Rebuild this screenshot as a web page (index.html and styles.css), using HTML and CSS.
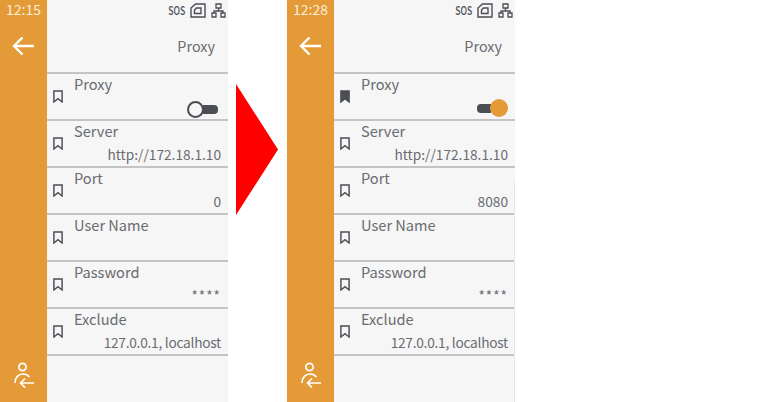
FILE: index.html
```html
<!DOCTYPE html>
<html lang="en">

<head>
    <meta charset="UTF-8">
    <meta name="viewport" content="width=device-width, initial-scale=1.0">
    <title>Proxy</title>
    <link rel="stylesheet" href="styles.css">
</head>

<body>
    <svg class="defs" width="0" height="0">
        <symbol id="mark" viewBox="0 0 11 14">
            <path d="M1 1h9v12L5.500 9.500 1 13z" fill="none" stroke="currentColor" stroke-width="1.600" />
        </symbol>
        <symbol id="mark-on" viewBox="0 0 11 14">
            <path d="M1 1h9v12L5.500 9.500 1 13z" fill="currentColor" stroke="currentColor" stroke-width="1.600" />
        </symbol>
        <symbol id="back" viewBox="0 0 24 20">
            <path d="M22 10H2M10.500 1.500 2 10l8.500 8.500" fill="none" stroke="currentColor" stroke-width="2.400" />
        </symbol>
        <symbol id="user" viewBox="0 0 22 26">
            <circle cx="9.500" cy="5" r="3.600" fill="none" stroke="currentColor" stroke-width="1.700" />
            <path d="M2 21c0-5.500 3.500-9 8-9 3 0 5 1 6.500 3M21 21H7.500M12 16.500 7.500 21l4.500 4.500" fill="none" stroke="currentColor" stroke-width="1.700" />
        </symbol>
        <symbol id="sim" viewBox="0 0 16 15">
            <path d="M5.500 1H15v13H1V5z" fill="none" stroke="currentColor" stroke-width="1.400" />
            <path d="M6.500 5H11v5.500H4.500V7z" fill="none" stroke="currentColor" stroke-width="1.400" />
        </symbol>
        <symbol id="net" viewBox="0 0 15 15">
            <path d="M5 1h5v4H5zM1 10h4v4H1zM10 10h4v4h-4zM7.500 5v3M3 10V8h9v2" fill="none" stroke="currentColor" stroke-width="1.300" />
        </symbol>
    </svg>

    <div class="page">
        <section class="screen">
            <aside class="side">
                <span class="clock">12:15</span>
                <svg class="back"><use href="#back" /></svg>
                <svg class="user"><use href="#user" /></svg>
            </aside>
            <main class="panel">
                <div class="status">
                    <span class="sos">SOS</span>
                    <svg class="sim"><use href="#sim" /></svg>
                    <svg class="net"><use href="#net" /></svg>
                </div>
                <h1 class="title">Proxy</h1>
                <ul class="list">
                    <li class="row">
                        <svg class="mark"><use href="#mark" /></svg>
                        <div class="body">
                            <p class="label">Proxy</p>
                            <div class="toggle off"><i class="knob"></i><i class="pill"></i></div>
                        </div>
                    </li>
                    <li class="row">
                        <svg class="mark"><use href="#mark" /></svg>
                        <div class="body">
                            <p class="label">Server</p>
                            <p class="value">http://172.18.1.10</p>
                        </div>
                    </li>
                    <li class="row">
                        <svg class="mark"><use href="#mark" /></svg>
                        <div class="body">
                            <p class="label">Port</p>
                            <p class="value">0</p>
                        </div>
                    </li>
                    <li class="row">
                        <svg class="mark"><use href="#mark" /></svg>
                        <div class="body">
                            <p class="label">User Name</p>
                            <p class="value"></p>
                        </div>
                    </li>
                    <li class="row">
                        <svg class="mark"><use href="#mark" /></svg>
                        <div class="body">
                            <p class="label">Password</p>
                            <p class="value stars">****</p>
                        </div>
                    </li>
                    <li class="row">
                        <svg class="mark"><use href="#mark" /></svg>
                        <div class="body">
                            <p class="label">Exclude</p>
                            <p class="value tight">127.0.0.1, localhost</p>
                        </div>
                    </li>
                </ul>
            </main>
        </section>

        <div class="arrow-box"><div class="arrow"></div></div>

        <section class="screen edge">
            <aside class="side">
                <span class="clock">12:28</span>
                <svg class="back"><use href="#back" /></svg>
                <svg class="user"><use href="#user" /></svg>
            </aside>
            <main class="panel">
                <div class="status">
                    <span class="sos">SOS</span>
                    <svg class="sim"><use href="#sim" /></svg>
                    <svg class="net"><use href="#net" /></svg>
                </div>
                <h1 class="title">Proxy</h1>
                <ul class="list">
                    <li class="row">
                        <svg class="mark"><use href="#mark-on" /></svg>
                        <div class="body">
                            <p class="label">Proxy</p>
                            <div class="toggle on"><i class="pill"></i><i class="knob"></i></div>
                        </div>
                    </li>
                    <li class="row">
                        <svg class="mark"><use href="#mark" /></svg>
                        <div class="body">
                            <p class="label">Server</p>
                            <p class="value">http://172.18.1.10</p>
                        </div>
                    </li>
                    <li class="row">
                        <svg class="mark"><use href="#mark" /></svg>
                        <div class="body">
                            <p class="label">Port</p>
                            <p class="value">8080</p>
                        </div>
                    </li>
                    <li class="row">
                        <svg class="mark"><use href="#mark" /></svg>
                        <div class="body">
                            <p class="label">User Name</p>
                            <p class="value"></p>
                        </div>
                    </li>
                    <li class="row">
                        <svg class="mark"><use href="#mark" /></svg>
                        <div class="body">
                            <p class="label">Password</p>
                            <p class="value stars">****</p>
                        </div>
                    </li>
                    <li class="row">
                        <svg class="mark"><use href="#mark" /></svg>
                        <div class="body">
                            <p class="label">Exclude</p>
                            <p class="value tight">127.0.0.1, localhost</p>
                        </div>
                    </li>
                </ul>
            </main>
        </section>
    </div>
</body>

</html>
```

FILE: styles.css
```css
*,
::before,
::after {
    margin: 0;
    padding: 0;
    box-sizing: border-box;
}

html,
body {
    height: 100%;
}

body {
    font: 14.600px/20px "Noto Sans CJK KR", "Noto Sans", sans-serif;
    background: #fff;
    color: #6a6c71;
    overflow: hidden;
}

.defs {
    position: absolute;
}

.page {
    display: flex;
    height: 402px;
}

.screen {
    position: relative;
    display: flex;
    width: 228px;
    height: 402px;
    background: #f6f6f6;
}

/* faint edge on the lower part of the second screen */
.screen.edge::after {
    content: "";
    position: absolute;
    top: 182px;
    right: 0;
    bottom: 0;
    width: 1px;
    background: #e4e4e4;
}

.side {
    width: 47px;
    background: #e49a36;
    color: #fff;
    display: flex;
    flex-direction: column;
    align-items: center;
}

.clock {
    font-size: 14px;
    line-height: 18px;
    color: #fbeeda;
}

.back {
    width: 24px;
    height: 20px;
    margin-top: 18px;
}

.user {
    width: 22px;
    height: 26px;
    margin-top: auto;
    margin-bottom: 14px;
}

.panel {
    flex: 1;
    min-width: 0;
}

.status {
    height: 20px;
    display: flex;
    justify-content: flex-end;
    align-items: center;
    padding-right: 2px;
    color: #4b4e55;
}

.sos {
    font-size: 12px;
    font-weight: 500;
    transform: scaleX(0.72);
    margin-right: 1px;
}

.sim {
    width: 16px;
    height: 15px;
    margin-right: 5px;
}

.net {
    width: 15px;
    height: 15px;
}

.title {
    font-size: 14.400px;
    font-weight: 400;
    line-height: 20px;
    text-align: right;
    padding: 16px 13px 0 0;
    height: 52px;
}

.list {
    list-style: none;
    border-top: 2px solid #c4c4c4;
}

.row {
    height: 47px;
    display: flex;
    border-bottom: 2px solid #c4c4c4;
}

.mark {
    width: 10px;
    height: 13px;
    flex: none;
    margin: 16px 0 0 6px;
    color: #4b4e55;
}

.body {
    flex: 1;
    padding: 0 7px 0 11px;
}

.label {
    height: 20px;
}

.value {
    height: 20px;
    margin-top: 3px;
    text-align: right;
    font-size: 13.700px;
}

.value.tight {
    letter-spacing: -0.250px;
}

.value.stars {
    letter-spacing: 1px;
}

.toggle {
    display: flex;
    justify-content: flex-end;
    align-items: center;
    height: 20px;
    margin-top: 5px;
}

.toggle.off {
    padding-right: 3px;
}

.knob {
    width: 17px;
    height: 17px;
    border-radius: 50%;
    border: 2px solid #4b4e55;
    background: #f6f6f6;
    z-index: 1;
}

.pill {
    width: 15px;
    height: 9px;
    background: #4b4e55;
    border-radius: 0 4px 4px 0;
    margin-left: -1px;
}

.toggle.on {
    margin-top: 4px;
}

.toggle.on .pill {
    width: 14px;
    border-radius: 4px 0 0 4px;
    margin: 0 -1px 0 0;
}

.toggle.on .knob {
    width: 18px;
    height: 18px;
    border: 0;
    background: #e49a36;
}

.arrow-box {
    width: 59px;
    padding: 84px 0 0 8px;
}

.arrow {
    width: 42px;
    height: 131px;
    background: #f00;
    clip-path: polygon(0 0, 100% 50%, 0 100%);
}
```
